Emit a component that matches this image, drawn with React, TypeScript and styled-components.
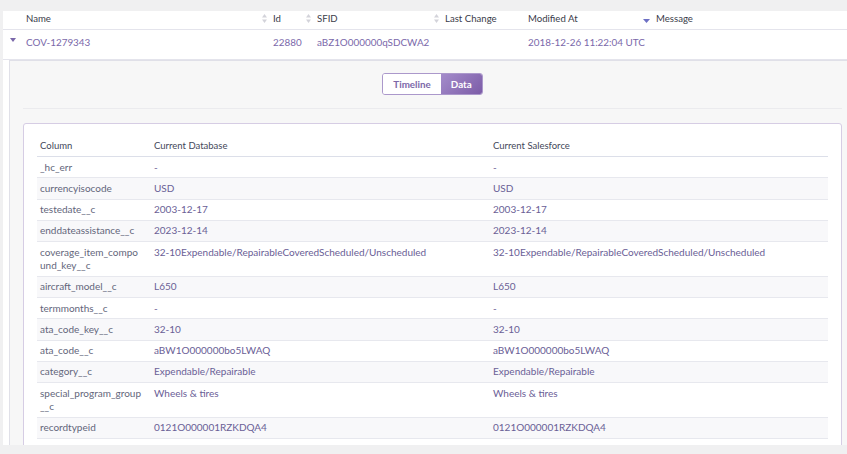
import React from 'react';
import styled, { createGlobalStyle } from 'styled-components';

const GlobalStyle = createGlobalStyle`
  html, body { margin: 0; padding: 0; overflow: hidden; background: #f0f0f1; }
  body { font-family: Lato, "Open Sans", sans-serif; }
`;

const COLS = '19px 247px 44px 128px 83px 128px 1fr';

const Page = styled.div`
  padding: 11px 0 0 3px;
  width: 853px;
`;

const Panel = styled.div`
  background: #fff;
  height: 434px;
  overflow: hidden;
`;

const HeadRow = styled.div`
  display: grid;
  grid-template-columns: ${COLS};
  height: 18px;
  border-bottom: 1px solid #e4e4ec;
`;

const HeadCell = styled.div`
  display: flex;
  align-items: flex-start;
  justify-content: space-between;
  padding: 1px 2px 0 4px;
  font-size: 9.6px;
  line-height: 13px;
  color: #3a3c4a;
`;

const SortIcon = styled.svg`
  margin-top: 2px;
  flex: none;
`;

const DataRow = styled.div`
  display: grid;
  grid-template-columns: ${COLS};
  height: 29px;
  border-bottom: 1px solid #e4e4ec;
`;

const DataCell = styled.div`
  padding: 5px 4px 0;
  font-size: 9.9px;
  line-height: 14px;
  color: #7a68aa;
  white-space: nowrap;
`;

const CaretCell = styled.div`
  display: flex;
  justify-content: flex-end;
  padding: 8px 6px 0 0;
`;

const Detail = styled.div`
  margin-left: 6px;
  border: 1px solid #e0e0e8;
  border-bottom: none;
  background: #f7f7f7;
  padding: 12px 13px 0;
`;

const ToggleRow = styled.div`
  display: flex;
  justify-content: center;
  padding-bottom: 13px;
  border-bottom: 1px solid #ebebee;
`;

const ToggleGroup = styled.div`
  display: flex;
  border: 1px solid #ab98cb;
  border-radius: 3px;
  overflow: hidden;
  height: 20px;
`;

const ToggleButton = styled.button<{ $active?: boolean }>`
  border: none;
  margin: 0;
  padding: 0 10px;
  font-family: inherit;
  font-size: 9.8px;
  font-weight: 700;
  cursor: pointer;
  color: ${(p) => (p.$active ? '#ffffff' : '#7c68a9')};
  background: ${(p) => (p.$active ? 'linear-gradient(135deg, #a48ccb 0%, #7c5ca7 100%)' : '#ffffff')};
`;

const Card = styled.div`
  margin-top: 14px;
  border: 1px solid #d6cde4;
  border-radius: 3px;
  background: #fff;
  padding: 11px 13px;
`;

const Table = styled.table`
  width: 100%;
  border-collapse: collapse;
  table-layout: fixed;
`;

const Th = styled.th`
  text-align: left;
  font-weight: 400;
  font-size: 9.5px;
  color: #44475a;
  height: 21px;
  padding: 0 3px;
  border-bottom: 1px solid #dcdfe9;
`;

const Tr = styled.tr`
  &:nth-child(even) td { background: #f8f8fa; }
`;

const Td = styled.td<{ $kind: 'name' | 'value' }>`
  padding: 3.5px ${(p) => (p.$kind === 'name' ? '8.6px' : '3px')} 3.5px 3px;
  font-size: 10px;
  line-height: 13.3px;
  vertical-align: top;
  border-bottom: 1px solid #e7e8ee;
  color: ${(p) => (p.$kind === 'name' ? '#63667b' : '#6a6096')};
  word-break: ${(p) => (p.$kind === 'name' ? 'break-all' : 'normal')};
`;

const BothSort = () => (
  <SortIcon width="5" height="9" viewBox="0 0 5 9">
    <path d="M2.5 0 L5 3.5 H0 Z" fill="#d3d3da" />
    <path d="M2.5 9 L5 5.5 H0 Z" fill="#d3d3da" />
  </SortIcon>
);

const DescSort = () => (
  <SortIcon width="7" height="9" viewBox="0 0 7 9">
    <path d="M0 5 H7 L3.5 9 Z" fill="#6d70c4" />
  </SortIcon>
);

const Caret = () => (
  <svg width="6" height="4" viewBox="0 0 6 4">
    <path d="M0 0 H6 L3 4 Z" fill="#7a68aa" />
  </svg>
);

type Sort = 'none' | 'both' | 'desc';
const headers: { label: string; sort: Sort }[] = [
  { label: '', sort: 'none' },
  { label: 'Name', sort: 'both' },
  { label: 'Id', sort: 'both' },
  { label: 'SFID', sort: 'both' },
  { label: 'Last Change', sort: 'none' },
  { label: 'Modified At', sort: 'desc' },
  { label: 'Message', sort: 'none' },
];

const rows: [string, string, string][] = [
  ['_hc_err', '-', '-'],
  ['currencyisocode', 'USD', 'USD'],
  ['testedate__c', '2003-12-17', '2003-12-17'],
  ['enddateassistance__c', '2023-12-14', '2023-12-14'],
  [
    'coverage_item_compound_key__c',
    '32-10Expendable/RepairableCoveredScheduled/Unscheduled',
    '32-10Expendable/RepairableCoveredScheduled/Unscheduled',
  ],
  ['aircraft_model__c', 'L650', 'L650'],
  ['termmonths__c', '-', '-'],
  ['ata_code_key__c', '32-10', '32-10'],
  ['ata_code__c', 'aBW1O000000bo5LWAQ', 'aBW1O000000bo5LWAQ'],
  ['category__c', 'Expendable/Repairable', 'Expendable/Repairable'],
  ['special_program_group__c', 'Wheels & tires', 'Wheels & tires'],
  ['recordtypeid', '0121O000001RZKDQA4', '0121O000001RZKDQA4'],
];

export default function App() {
  return (
    <>
      <GlobalStyle />
      <Page>
        <Panel>
          <HeadRow>
            {headers.map((h, i) => (
              <HeadCell key={i}>
                <span>{h.label}</span>
                {h.sort === 'both' && <BothSort />}
                {h.sort === 'desc' && <DescSort />}
              </HeadCell>
            ))}
          </HeadRow>
          <DataRow>
            <CaretCell>
              <Caret />
            </CaretCell>
            <DataCell>COV-1279343</DataCell>
            <DataCell>22880</DataCell>
            <DataCell>aBZ1O000000qSDCWA2</DataCell>
            <DataCell></DataCell>
            <DataCell>2018-12-26 11:22:04 UTC</DataCell>
            <DataCell></DataCell>
          </DataRow>
          <Detail>
            <ToggleRow>
              <ToggleGroup>
                <ToggleButton>Timeline</ToggleButton>
                <ToggleButton $active>Data</ToggleButton>
              </ToggleGroup>
            </ToggleRow>
            <Card>
              <Table>
                <colgroup>
                  <col style={{ width: 114 }} />
                  <col style={{ width: 339 }} />
                  <col />
                </colgroup>
                <thead>
                  <tr>
                    <Th>Column</Th>
                    <Th>Current Database</Th>
                    <Th>Current Salesforce</Th>
                  </tr>
                </thead>
                <tbody>
                  {rows.map((r) => (
                    <Tr key={r[0]}>
                      <Td $kind="name">{r[0]}</Td>
                      <Td $kind="value">{r[1]}</Td>
                      <Td $kind="value">{r[2]}</Td>
                    </Tr>
                  ))}
                </tbody>
              </Table>
            </Card>
          </Detail>
        </Panel>
      </Page>
    </>
  );
}
